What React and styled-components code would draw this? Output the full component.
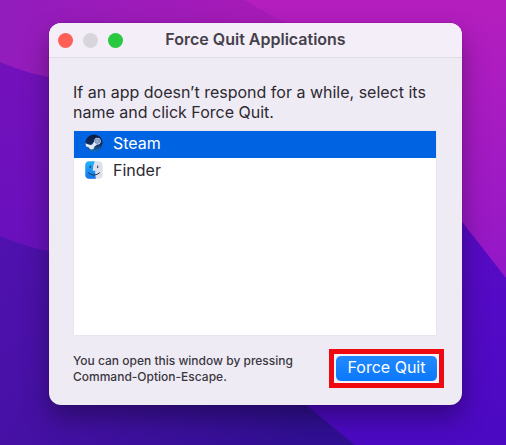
import React, { useState } from 'react';
import styled, { createGlobalStyle } from 'styled-components';

const SteamIcon = () => (
    <svg width="18" height="18" viewBox="0 0 18 18" aria-hidden="true">
        <defs>
            <linearGradient id="steam-bg" x1="0" y1="0" x2="0" y2="1">
                <stop offset="0" stopColor="#0d1a3c" />
                <stop offset="0.6" stopColor="#0f2f66" />
                <stop offset="1" stopColor="#1f6fb4" />
            </linearGradient>
        </defs>
        <circle cx="9" cy="9" r="8.6" fill="url(#steam-bg)" />
        <path
            d="M0.4 9.2 L5.2 11 Q6.2 10.3 7.2 10.4 L9 7.8 Q9 4 12.2 3.7 Q15.7 4 15.8 7.2 Q15.5 10.5 12.2 10.6 L9.6 12.6 Q9.3 15.3 6.6 15.5 Q4.5 15.3 3.8 13.5 L1 12.4 Z"
            fill="#dfe8f5"
        />
        <circle cx="12.3" cy="7.1" r="2.4" fill="#8eaad0" stroke="#5f7fb0" strokeWidth="0.8" />
    </svg>
);

const FinderIcon = () => (
    <svg width="18" height="18" viewBox="0 0 18 18" aria-hidden="true">
        <defs>
            <linearGradient id="finder-left" x1="0" y1="0" x2="0" y2="1">
                <stop offset="0" stopColor="#27b5fb" />
                <stop offset="1" stopColor="#1272ea" />
            </linearGradient>
            <clipPath id="finder-clip">
                <rect x="0.3" y="0.3" width="17.4" height="17.4" rx="4" />
            </clipPath>
        </defs>
        <g clipPath="url(#finder-clip)">
            <rect width="18" height="18" fill="#e0e2ea" />
            <path d="M0 0 H9.8 Q8 4.5 7.7 9.8 H10.2 Q10.1 14 10.9 18 H0 Z" fill="url(#finder-left)" />
        </g>
        <path d="M5.2 5 V6.6 M12.7 5 V6.6" stroke="#1d3557" strokeWidth="1.1" strokeLinecap="round" />
        <path d="M3.5 11.9 Q9 16.5 14.5 11.9" fill="none" stroke="#1d3557" strokeWidth="1" strokeLinecap="round" />
    </svg>
);

const apps = [
    { id: 'steam', name: 'Steam', icon: <SteamIcon /> },
    { id: 'finder', name: 'Finder', icon: <FinderIcon /> },
];

const Wallpaper = () => (
    <WallpaperSvg viewBox="0 0 506 445" preserveAspectRatio="none" aria-hidden="true">
        <defs>
            <linearGradient id="wall-top" x1="0" y1="0" x2="1" y2="0">
                <stop offset="0" stopColor="#921cbc" />
                <stop offset="0.5" stopColor="#a61bb8" />
                <stop offset="1" stopColor="#b41cbb" />
            </linearGradient>
            <linearGradient id="wall-right" x1="0" y1="0" x2="0" y2="1">
                <stop offset="0" stopColor="#b51ebe" />
                <stop offset="1" stopColor="#9017c8" />
            </linearGradient>
            <linearGradient id="wall-left" x1="0" y1="0" x2="0" y2="1">
                <stop offset="0" stopColor="#7311bb" />
                <stop offset="1" stopColor="#6610bd" />
            </linearGradient>
            <linearGradient id="wall-low" gradientUnits="userSpaceOnUse" x1="0" y1="250" x2="300" y2="445">
                <stop offset="0" stopColor="#5011ae" />
                <stop offset="1" stopColor="#300f92" />
            </linearGradient>
            <linearGradient id="wall-corner" x1="0" y1="0" x2="0" y2="1">
                <stop offset="0" stopColor="#5c0bc6" />
                <stop offset="1" stopColor="#4b09c2" />
            </linearGradient>
        </defs>
        <rect width="506" height="445" fill="url(#wall-top)" />
        <path d="M245 0 Q290 28 360 60 L400 300 H506 V0 Z" fill="url(#wall-right)" />
        <path d="M0 62 Q30 75 60 79 L250 100 V300 H0 Z" fill="url(#wall-left)" />
        <path d="M0 236 Q30 249 60 253 L250 260 L400 445 H0 Z" fill="url(#wall-low)" />
        <path d="M420 170 L463 223 L506 278 V445 H355 L300 400 Z" fill="url(#wall-corner)" />
    </WallpaperSvg>
);

const App = () => {
    const [selected, setSelected] = useState('steam');

    return (
        <>
            <GlobalStyle />
            <Desktop>
                <Wallpaper />
                <Window aria-labelledby="window-title">
                    <TitleBar>
                        <Controls>
                            <Light type="button" aria-label="Close" $color="#ff5f57" />
                            <Light type="button" aria-label="Minimize" $color="#d9d5dd" disabled />
                            <Light type="button" aria-label="Zoom" $color="#28c840" />
                        </Controls>
                        <Title id="window-title">Force Quit Applications</Title>
                    </TitleBar>
                    <Body>
                        <Message>
                            If an app doesn’t respond for a while, select its name and click Force Quit.
                        </Message>
                        <AppList>
                            {apps.map(({ id, name, icon }) => {
                                return (
                                    <li key={id}>
                                        <AppRow
                                            type="button"
                                            aria-pressed={selected === id}
                                            $selected={selected === id}
                                            onClick={() => setSelected(id)}
                                        >
                                            {icon}
                                            {name}
                                        </AppRow>
                                    </li>
                                );
                            })}
                        </AppList>
                        <Footer>
                            <Hint>You can open this window by pressing Command-Option-Escape.</Hint>
                            <Highlight>
                                <QuitButton type="button">Force Quit</QuitButton>
                            </Highlight>
                        </Footer>
                    </Body>
                </Window>
            </Desktop>
        </>
    );
};

const GlobalStyle = createGlobalStyle`
    * {
        box-sizing: border-box;
        margin: 0;
        padding: 0;
    }

    body {
        background: #3a0f9c;
        font-family: Inter, 'Liberation Sans', sans-serif;
        color: #2c2931;
    }

    button {
        border: none;
        font-family: inherit;
    }
`;

const Desktop = styled.main`
    position: relative;
    display: flex;
    min-height: 100vh;
    padding: 23px 44px 40px 49px;
`;

const WallpaperSvg = styled.svg`
    position: absolute;
    top: 0;
    left: 0;
    width: 100%;
    height: 100%;
`;

const Window = styled.section`
    position: relative;
    flex: 1;
    display: flex;
    flex-direction: column;
    border-radius: 12px;
    background: #efebf5;
    overflow: hidden;
    box-shadow: 0 0 1px rgba(0, 0, 0, 0.5), 0 12px 26px rgba(0, 0, 0, 0.35);
`;

const TitleBar = styled.header`
    display: grid;
    grid-template-columns: 1fr auto 1fr;
    align-items: center;
    height: 35px;
    padding: 0 9px;
    background: #f4eef9;
    border-bottom: 1px solid #e0dae5;
`;

const Controls = styled.div`
    display: flex;
    gap: 10px;
`;

const Light = styled.button`
    width: 15px;
    height: 15px;
    border-radius: 50%;
    background: ${({ $color }) => $color};
`;

const Title = styled.h1`
    font-size: 16px;
    line-height: 20px;
    padding-bottom: 2px;
    font-weight: 600;
    color: #454149;
`;

const Body = styled.div`
    flex: 1;
    display: flex;
    flex-direction: column;
    padding: 24px 18px 17px 24px;
`;

const Message = styled.p`
    font-size: 16px;
    line-height: 20px;
`;

const AppList = styled.ul`
    flex: 1;
    margin: 9px 8px 14px 1px;
    list-style: none;
    background: #ffffff;
    box-shadow: 0 0 1px #cfcad6;
`;

const AppRow = styled.button`
    display: flex;
    align-items: center;
    gap: 10px;
    width: 100%;
    height: 27px;
    padding: 0 11px 4px;
    font-size: 16px;
    line-height: 20px;
    text-align: left;
    color: ${({ $selected }) => ($selected ? '#ffffff' : '#2c2931')};
    background: ${({ $selected }) => ($selected ? '#0063e1' : 'transparent')};
`;

const Footer = styled.footer`
    display: flex;
    align-items: center;
    justify-content: space-between;
`;

const Hint = styled.p`
    width: 240px;
    font-size: 12px;
    line-height: 16px;
    font-weight: 500;
    color: #3a3740;
`;

const Highlight = styled.div`
    padding: 1px;
    border: 5px solid #ee0a10;
    background: #f7f3fa;
`;

const QuitButton = styled.button`
    display: block;
    width: 103px;
    height: 27px;
    padding-bottom: 4px;
    border: 1px solid #f7f3fa;
    border-radius: 6px;
    background: linear-gradient(#2389ff, #0a78fb);
    font-size: 16px;
    line-height: 20px;
    color: #ffffff;
`;

export default App;
